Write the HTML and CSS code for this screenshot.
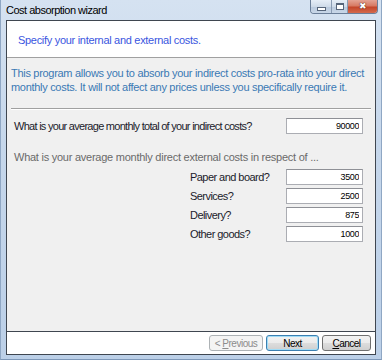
FILE: index.html
```html
<!DOCTYPE html>
<html lang="en">
<head>
    <meta charset="UTF-8">
    <meta name="viewport" content="width=device-width, initial-scale=1.0">
    <title>Cost absorption wizard</title>
    <link rel="stylesheet" href="styles.css">
</head>
<body>
    <div class="window">
        <div class="titlebar">
            <span class="title">Cost absorption wizard</span>
            <div class="caption">
                <span class="cap-btn cap-min"><i></i></span>
                <span class="cap-btn cap-max"><i></i></span>
                <span class="cap-btn cap-close">&#x2716;</span>
            </div>
        </div>
        <div class="client">
            <div class="header">Specify your internal and external costs.</div>
            <div class="content">
                <p class="intro">This program allows you to absorb your indirect costs pro-rata into your direct monthly costs. It will not affect any prices unless you specifically require it.</p>
                <hr class="etched">
                <div class="row main-row">
                    <label for="indirect">What is your average monthly total of your indirect costs?</label>
                    <input type="text" id="indirect" value="90000">
                </div>
                <p class="sub">What is your average monthly direct external costs in respect of ...</p>
                <div class="costs">
                    <div class="row">
                        <label for="paper">Paper and board?</label>
                        <input type="text" id="paper" value="3500">
                    </div>
                    <div class="row">
                        <label for="services">Services?</label>
                        <input type="text" id="services" value="2500">
                    </div>
                    <div class="row">
                        <label for="delivery">Delivery?</label>
                        <input type="text" id="delivery" value="875">
                    </div>
                    <div class="row">
                        <label for="other">Other goods?</label>
                        <input type="text" id="other" value="1000">
                    </div>
                </div>
            </div>
            <div class="footer">
                <button type="button" class="btn btn-prev" disabled>&lt; <u>P</u>revious</button>
                <button type="button" class="btn btn-default">Next</button>
                <button type="button" class="btn btn-cancel"><u>C</u>ancel</button>
            </div>
        </div>
    </div>
</body>
</html>
```

FILE: styles.css
```css
html, body {
    margin: 0;
    padding: 0;
}
body {
    font-family: "Liberation Sans", Arial, sans-serif;
    font-size: 11px;
    background: #fff;
}
.window {
    width: 382px;
    height: 360px;
    box-sizing: border-box;
    padding: 0 5px 4px 5px;
    display: flex;
    flex-direction: column;
    background: linear-gradient(to bottom, #d5e2f1 0%, #c6d7eb 40%, #bcd0e8 100%);
    border-left: 1px solid #8fa7c4;
    border-right: 1px solid #8fa7c4;
    border-bottom: 1px solid #7d97b8;
}
.titlebar {
    height: 20px;
    display: flex;
    align-items: flex-start;
    justify-content: space-between;
}
.title {
    font-family: "Liberation Sans", Arial, sans-serif;
    font-size: 11px;
    letter-spacing: -0.5px;
    color: #000;
    margin-top: 4px;
}
.caption {
    display: flex;
    margin-right: -2px;
    border: 1px solid #6b7f99;
    border-top: none;
    border-radius: 0 0 4px 4px;
    overflow: hidden;
    height: 13px;
}
.cap-btn {
    display: flex;
    align-items: center;
    justify-content: center;
    height: 13px;
    background: linear-gradient(to bottom, #e6eef7 0%, #cfdbe9 50%, #b9c9dd 51%, #c9d7e8 100%);
    border-right: 1px solid #8a9cb4;
}
.cap-min {
    width: 20px;
}
.cap-min i {
    width: 7px;
    height: 2px;
    margin-top: 4px;
    border: 1px solid #56657a;
    background: #fff;
}
.cap-max {
    width: 15px;
}
.cap-max i {
    width: 6px;
    height: 4px;
    border: 1px solid #56657a;
    border-top-width: 2px;
    background: #fff;
}
.cap-close {
    width: 29px;
    border-right: none;
    color: #fff;
    font-size: 9px;
    line-height: 13px;
    text-shadow: 0 0 1px #4a1a10, 0 0 1px #4a1a10;
    background: linear-gradient(to bottom, #e4a394 0%, #d77a63 45%, #c4462a 55%, #d46a4d 100%);
}
.client {
    flex: 1;
    display: flex;
    flex-direction: column;
    border: 1px solid #3f4650;
    background: #f0f0f0;
}
.header {
    height: 36px;
    background: #fff;
    color: #3a56e0;
    font-size: 11px;
    letter-spacing: -0.3px;
    padding-left: 11px;
    line-height: 38px;
    border-bottom: 1px solid #a0a0a0;
}
.content {
    flex: 1;
    padding: 8px 4px 0 4px;
}
.intro {
    margin: 0;
    color: #3a79b4;
    font-size: 11px;
    letter-spacing: -0.3px;
    line-height: 14px;
}
.etched {
    margin: 14px 0 0 0;
    height: 0;
    border: none;
    border-top: 1px solid #a0a0a0;
    border-bottom: 1px solid #fff;
}
.row {
    display: flex;
    align-items: center;
    height: 19px;
}
.main-row {
    margin-top: 6px;
    padding-left: 3px;
}
.row label {
    flex: 1;
    color: #1b1b2b;
    font-size: 11px;
    letter-spacing: -0.55px;
    white-space: nowrap;
}
.main-row label {
    letter-spacing: -0.72px;
}
.row input {
    box-sizing: border-box;
    width: 77px;
    height: 16px;
    padding: 0 3px 0 0;
    margin-right: 8px;
    border: 1px solid #abadb3;
    border-top-color: #8e9096;
    background: #fff;
    text-align: right;
    font-family: "Liberation Sans", Arial, sans-serif;
    font-size: 9px;
    letter-spacing: -0.4px;
    color: #000;
}
.sub {
    margin: 15px 0 3px 3px;
    color: #6a6a6a;
    font-size: 11px;
    letter-spacing: -0.25px;
    line-height: 14px;
}
.costs {
    padding-left: 179px;
}
.footer {
    height: 22px;
    background: #fff;
    border-top: 1px solid #3f4650;
    display: flex;
    align-items: center;
    justify-content: flex-end;
    gap: 3px;
    padding-right: 4px;
}
.btn {
    width: 53px;
    height: 16px;
    padding: 0;
    font-family: "Liberation Sans", Arial, sans-serif;
    font-size: 10px;
    letter-spacing: -0.5px;
    color: #000;
    border: 1px solid #707070;
    border-radius: 3px;
    background: linear-gradient(to bottom, #f2f2f2 0%, #ebebeb 50%, #dddddd 51%, #cfcfcf 100%);
}
.btn-prev {
    width: 54px;
}
.btn-cancel {
    width: 49px;
}
.btn:disabled {
    color: #8c8c8c;
    border-color: #adb2b5;
    background: #f4f4f4;
}
.btn-default {
    border-color: #3c7fb1;
    box-shadow: inset 0 0 0 1px #9fdcf7;
}
```
